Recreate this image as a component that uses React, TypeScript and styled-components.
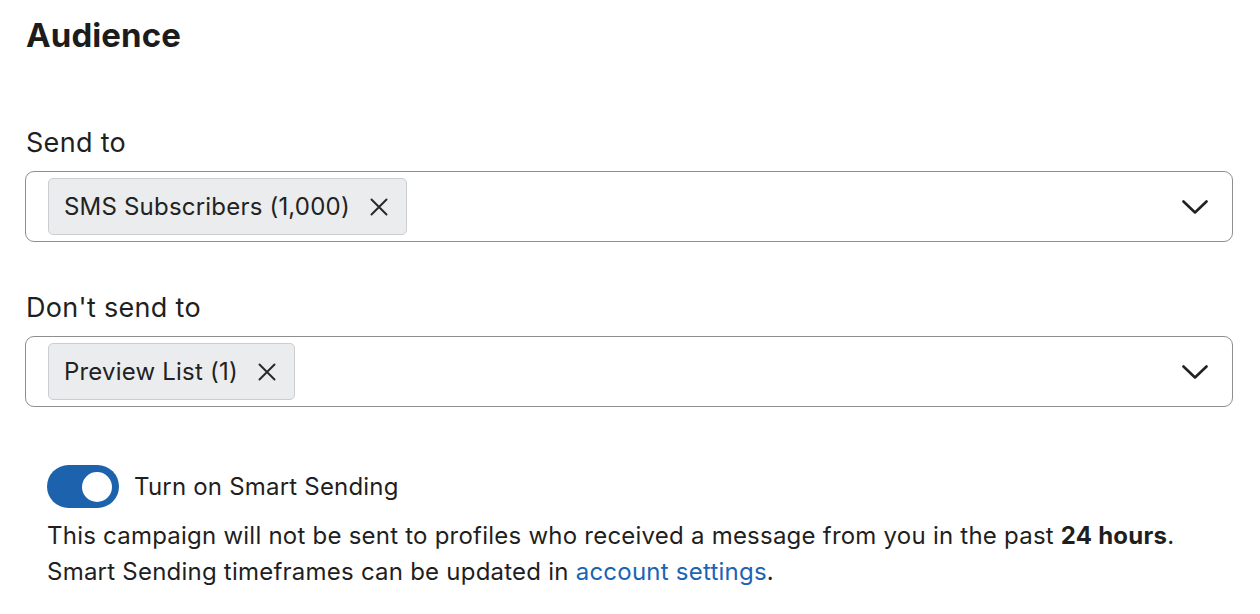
import React from "react";
import styled, { createGlobalStyle } from "styled-components";

const Global = createGlobalStyle`
  html, body { margin: 0; padding: 0; background: #ffffff; }
  body { font-family: Inter, "Noto Sans", sans-serif; color: #1f1f1f; }
`;

const Page = styled.div`
  padding: 15px 27px 0 25px;
  display: flex;
  flex-direction: column;
`;

const Heading = styled.h1`
  margin: 0 0 0 1px;
  font-size: 33px;
  line-height: 40px;
  font-weight: 700;
  letter-spacing: 0.1px;
  color: #1c1c1c;
`;

const Section = styled.div<{ $top: number }>`
  margin-top: ${(p) => p.$top}px;
  display: flex;
  flex-direction: column;
`;

const Label = styled.label`
  font-size: 27px;
  line-height: 32px;
  letter-spacing: 0.3px;
  margin: 0 0 12px 1px;
  color: #1f1f1f;
`;

const Field = styled.div`
  display: flex;
  align-items: center;
  justify-content: space-between;
  border: 1px solid #8e8e8e;
  border-radius: 9px;
  padding: 6px 24px 6px 22px;
`;

const Tag = styled.div`
  display: flex;
  align-items: center;
  gap: 20px;
  height: 57px;
  box-sizing: border-box;
  padding: 0 18px 0 15px;
  background: #ebecee;
  border: 1px solid #cbcdd1;
  border-radius: 5px;
  font-size: 24px;
  letter-spacing: 0.2px;
  color: #222;
`;

const ToggleRow = styled.div`
  display: flex;
  align-items: center;
  gap: 15px;
  padding-left: 22px;
  margin-top: 58px;
`;

const Toggle = styled.div`
  width: 72px;
  height: 43px;
  border-radius: 22px;
  background: #1d62ac;
  display: flex;
  align-items: center;
  justify-content: flex-end;
  padding: 0 7px;
  box-sizing: border-box;
`;

const Knob = styled.div`
  width: 30px;
  height: 30px;
  border-radius: 50%;
  background: #ffffff;
`;

const ToggleLabel = styled.span`
  font-size: 24px;
  letter-spacing: 0.2px;
  color: #1f1f1f;
`;

const Help = styled.p`
  margin: 10px 0 0 22px;
  font-size: 24px;
  letter-spacing: 0.23px;
  line-height: 36px;
  color: #1f1f1f;
`;

const Link = styled.a`
  color: #1a64b4;
  text-decoration: none;
`;

const XIcon = () => (
  <svg width="18" height="18" viewBox="0 0 18 18">
    <path d="M1.5 1.5 L16.5 16.5 M16.5 1.5 L1.5 16.5" stroke="#2a2a2a" strokeWidth="2" strokeLinecap="round" />
  </svg>
);

const Chevron = () => (
  <svg width="26" height="14" viewBox="0 0 26 14">
    <path d="M1.5 1.5 L13 12.5 L24.5 1.5" fill="none" stroke="#222" strokeWidth="2.6" strokeLinecap="round" strokeLinejoin="round" />
  </svg>
);

export default function App() {
  return (
    <>
      <Global />
      <Page>
        <Heading>Audience</Heading>
        <Section $top={72}>
          <Label>Send to</Label>
          <Field>
            <Tag>
              SMS Subscribers (1,000)
              <XIcon />
            </Tag>
            <Chevron />
          </Field>
        </Section>
        <Section $top={50}>
          <Label>Don't send to</Label>
          <Field>
            <Tag>
              Preview List (1)
              <XIcon />
            </Tag>
            <Chevron />
          </Field>
        </Section>
        <ToggleRow>
          <Toggle>
            <Knob />
          </Toggle>
          <ToggleLabel>Turn on Smart Sending</ToggleLabel>
        </ToggleRow>
        <Help>
          This campaign will not be sent to profiles who received a message from you in the past <b>24 hours</b>.
          <br />
          Smart Sending timeframes can be updated in <Link href="#">account settings</Link>.
        </Help>
      </Page>
    </>
  );
}
